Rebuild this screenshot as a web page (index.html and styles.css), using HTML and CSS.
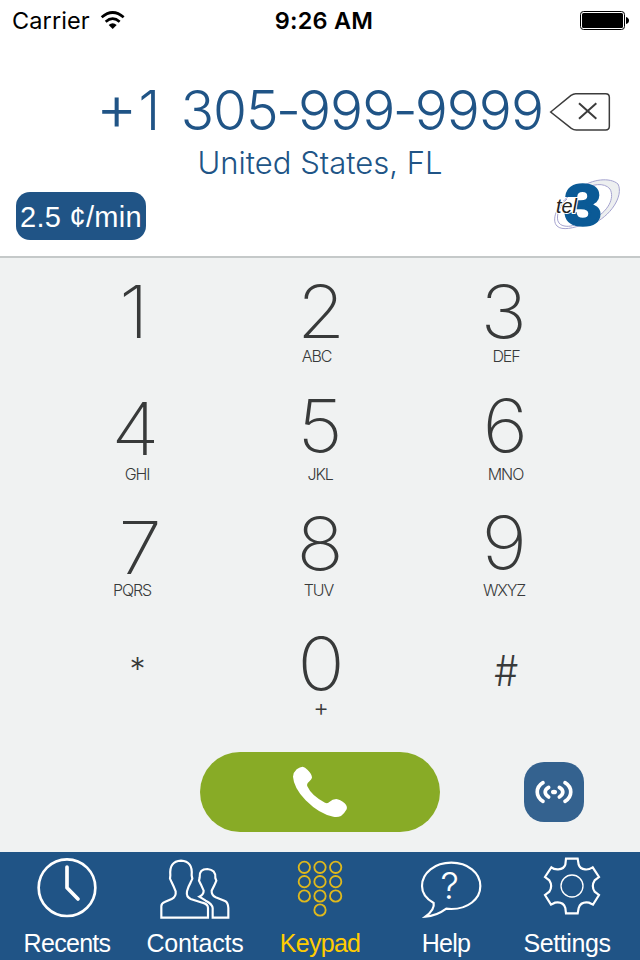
FILE: index.html
```html
<!DOCTYPE html>
<html lang="en">
<head>
  <meta charset="UTF-8" />
  <meta name="viewport" content="width=device-width, initial-scale=1.0" />
  <title>Keypad</title>
  <link rel="stylesheet" href="styles.css">
</head>
<body>
  <div class="phone">
    <div class="statusbar">
      <div class="carrier">
        <span>Carrier</span>
        <svg class="wifi" viewBox="300 30 78 60" width="26" height="20">
          <path d="M305 52 Q338 23 371 52" fill="none" stroke="#000" stroke-width="8"/>
          <path d="M317 65 Q338 47 359 65" fill="none" stroke="#000" stroke-width="8"/>
          <path d="M326 75 Q338 64 350 75 L338 87Z"/>
        </svg>
      </div>
      <div class="time">9:26 AM</div>
      <svg class="battery" viewBox="0 0 50 20" width="50" height="20">
        <rect x="0.5" y="1.5" width="44" height="18" rx="3" fill="none" stroke="#000"/>
        <rect x="2" y="3" width="41" height="15" rx="1.5"/>
        <path d="M46 7 Q49 8 49 10.500 Q49 13 46 14Z"/>
      </svg>
    </div>

    <div class="display">
      <div class="number-row">
        <div class="number"><span class="prefix">+</span>1 305<span class="dash">-</span>999<span class="dash">-</span>9999</div>
        <svg class="backspace" viewBox="687 273 186 120" width="62" height="40">
          <path d="M692 333 L753 283 Q760 278 767 278 H857 Q868 278 868 289 V376 Q868 387 857 387 H769 Q761 387 754 382Z"/>
          <path class="cross" d="M777 307 L829 353 M829 307 L777 353"/>
        </svg>
      </div>
      <div class="location">United States, FL</div>
      <div class="info-row">
        <div class="rate">2.5 ¢/min</div>
        <svg class="logo" viewBox="0 0 70 54" width="70" height="54">
          <path d="M28 10 C40 1 58 -1 66 6 C72 18 58 39 40 46 L41 41 C56 34 63 20 58 11 C52 4 40 6 31 12Z" fill="#edeff0" stroke="#a5a3cf"/>
          <path d="M17 18 C5 27 -1 42 5 48 C10 53 22 50 32 46 M15 21 C7 28 3 40 7 45 C10 49 18 49 22 47" fill="none" stroke="#a5a3cf"/>
          <text class="logo-three" x="12.500" y="47" textLength="37" lengthAdjust="spacingAndGlyphs">3</text>
          <text class="logo-tel" x="4" y="35" textLength="21" lengthAdjust="spacingAndGlyphs">tel</text>
        </svg>
      </div>
    </div>

    <div class="keypad">
      <div class="key key-1"><span class="digit">1</span></div>
      <div class="key key-2"><span class="digit">2</span><span class="letters">ABC</span></div>
      <div class="key key-3"><span class="digit">3</span><span class="letters">DEF</span></div>
      <div class="key key-4"><span class="digit">4</span><span class="letters">GHI</span></div>
      <div class="key key-5"><span class="digit">5</span><span class="letters">JKL</span></div>
      <div class="key key-6"><span class="digit">6</span><span class="letters">MNO</span></div>
      <div class="key key-7"><span class="digit">7</span><span class="letters">PQRS</span></div>
      <div class="key key-8"><span class="digit">8</span><span class="letters">TUV</span></div>
      <div class="key key-9"><span class="digit">9</span><span class="letters">WXYZ</span></div>
      <div class="key"><span class="symbol star">*</span></div>
      <div class="key key-0"><span class="digit">0</span><span class="letters plus">+</span></div>
      <div class="key"><span class="symbol hash">#</span></div>
    </div>

    <div class="actions">
      <div class="call">
        <svg viewBox="300 72 180 168" width="60" height="56">
          <path fill="#fff" d="M338 80 Q345 81 353 90 Q366 103 366 113 Q365 118 357 125 Q349 131 352 139 Q365 168 405 188 Q413 192 419 185 Q427 177 439 177 Q450 178 464 190 Q473 199 470 208 Q465 218 453 228 Q443 232 430 230 Q390 224 347 181 Q311 143 309 110 Q310 97 320 88 Q330 80 338 80Z"/>
        </svg>
      </div>
      <div class="signal">
        <svg viewBox="1002 66 180 180" width="60" height="60">
          <path d="M1059 128 C1036 142 1036 170 1059 184 M1076 142 C1062 150 1062 162 1076 171 M1125 128 C1148 142 1148 170 1125 184 M1108 142 C1122 150 1122 162 1108 171"/>
          <ellipse cx="1092" cy="156" rx="9" ry="7"/>
        </svg>
      </div>
    </div>

    <div class="tabs">
      <div class="tab recents">
        <svg viewBox="104 24 198 192" width="66" height="64">
          <circle cx="203" cy="119" r="85" stroke-width="8"/>
          <path d="M203 57 V119 L236 153" stroke-width="11" stroke-linecap="round" stroke-linejoin="round"/>
        </svg>
        <span>Recents</span>
      </div>
      <div class="tab contacts">
        <svg viewBox="477 24 222 192" width="74" height="64">
          <path d="M487 209 V175 Q487 166 497 162 L518 153 Q532 146 530 130 Q524 115 518 103 L513 92 L514 82 Q510 40 546 38 Q582 40 578 82 L580 92 L575 103 Q568 115 564 130 Q561 146 575 153 L610 164 Q627 168 627 180 V209Z"/>
          <path d="M641 209 V180 Q640 168 620 158 L601 146 Q614 140 614 128 L606 110 L600 98 L602 88 Q600 63 625 63 Q651 65 649 90 L652 98 L646 112 L638 128 Q637 142 650 148 L678 159 Q687 163 688 180 V209Z"/>
        </svg>
        <span>Contacts</span>
      </div>
      <div class="tab keys active">
        <svg viewBox="112 24 192 192" width="64" height="64">
          <circle cx="161" cy="58" r="17"/><circle cx="208" cy="58" r="17"/><circle cx="255" cy="58" r="17"/>
          <circle cx="161" cy="101" r="17"/><circle cx="208" cy="101" r="17"/><circle cx="255" cy="101" r="17"/>
          <circle cx="161" cy="144" r="17"/><circle cx="208" cy="144" r="17"/><circle cx="255" cy="144" r="17"/>
          <circle cx="208" cy="186" r="17"/>
        </svg>
        <span>Keypad</span>
      </div>
      <div class="tab help">
        <svg viewBox="84 24 198 192" width="66" height="64">
          <path d="M131 165 C108 152 96 135 96 114 C96 74 135 44 184 44 C233 44 271 74 271 114 C271 154 233 183 184 183 L169 182 C150 196 128 205 106 206 C124 193 134 180 131 165Z"/>
          <text class="question" x="179" y="153" text-anchor="middle">?</text>
        </svg>
        <span>Help</span>
      </div>
      <div class="tab settings">
        <svg viewBox="450 24 192 192" width="64" height="64">
          <path d="M528 32 H563 L566 50 Q570 63 585 64 Q595 66 608 58 L627 87 L614 97 Q603 114 614 131 L627 141 L609 170 L597 164 Q572 160 566 180 L563 196 H528 L526 180 Q520 160 495 164 L483 170 L465 141 L478 131 Q489 114 478 97 L465 87 L484 58 Q492 65 505 64 Q522 63 526 50Z"/>
          <circle cx="546" cy="114" r="33" stroke-width="4"/>
        </svg>
        <span>Settings</span>
      </div>
    </div>
  </div>
</body>
</html>
```
FILE: styles.css
```css
body {
  margin: 0;
  font-family: Inter, "Liberation Sans", sans-serif;
  background: #fff;
}
.phone {
  display: flex;
  flex-direction: column;
  width: 640px;
  height: 960px;
  overflow: hidden;
  background: #f0f2f2;
}
svg {
  display: block;
  flex: none;
  overflow: visible;
}

/* status bar */
.statusbar {
  display: grid;
  grid-template-columns: 1fr auto 1fr;
  align-items: center;
  height: 40px;
  padding: 0 10px 0 12px;
  font-size: 23.5px;
  color: #000;
  background: #fff;
}
.carrier {
  display: flex;
  align-items: center;
  gap: 10px;
  letter-spacing: 0.1px;
}
.time {
  padding-left: 6px;
  font-weight: 600;
  letter-spacing: 0.2px;
}
.battery {
  justify-self: end;
}

/* number display */
.display {
  box-sizing: border-box;
  height: 218px;
  padding-top: 39px;
  background: #fff;
  border-bottom: 2px solid #c5c9c9;
  color: #205486;
}
.number-row {
  display: flex;
  align-items: center;
  justify-content: flex-end;
  height: 62px;
  padding-right: 29px;
  gap: 6px;
}
.number {
  margin-top: -3px;
  font-size: 55px;
  font-weight: 300;
  line-height: 60px;
  letter-spacing: -1px;
  word-spacing: 7px;
  white-space: nowrap;
}
.prefix {
  font-size: 64px;
  letter-spacing: 1px;
}
.dash {
  margin: 0 -2px 0 -1.5px;
}
.backspace {
  margin-top: 3px;
}
.backspace path {
  fill: none;
  stroke: #3c3c3c;
  stroke-width: 4.5;
}
.backspace .cross {
  stroke-width: 6;
}
.location {
  height: 40px;
  line-height: 44px;
  font-size: 31px;
  font-weight: 300;
  text-align: center;
}
.info-row {
  display: flex;
  justify-content: space-between;
  align-items: flex-start;
  padding: 0 18px 0 16px;
}
.rate {
  width: 130px;
  height: 48px;
  margin-top: 11px;
  border-radius: 14px;
  background: #205486;
  color: #fff;
  font-family: "Liberation Sans", sans-serif;
  font-size: 29px;
  line-height: 51px;
  letter-spacing: 0.3px;
  text-align: center;
  white-space: nowrap;
}
.logo {
  margin-top: -3px;
}
.logo-three {
  font: bold 58px "Liberation Sans", sans-serif;
  fill: #0b5a96;
  stroke: #0b5a96;
  stroke-width: 2.5px;
}
.logo-tel {
  font: italic 20px "Liberation Sans", sans-serif;
  fill: #222;
  stroke: #fff;
  stroke-width: 2px;
  paint-order: stroke;
}

/* keypad */
.keypad {
  display: grid;
  grid-template-columns: repeat(3, 184px);
  grid-template-rows: 118px 116px 120px 118px;
  height: 472px;
  padding: 0 44px;
  color: #383a3a;
}
.key {
  display: flex;
  flex-direction: column;
  align-items: center;
  padding-top: 27px;
}
.digit {
  height: 54px;
  line-height: 54px;
  font-size: 73px;
  font-weight: 200;
  transform: scaleX(1.07);
}
.letters {
  height: 20px;
  margin-top: 7px;
  line-height: 20px;
  font-size: 16px;
  font-weight: 300;
  letter-spacing: -1.1px;
}
.plus {
  margin-top: 5px;
  font-size: 24px;
  letter-spacing: 0;
}
.symbol {
  font-weight: 300;
  line-height: 54px;
}
.star {
  margin: 4px 0 0 3px;
  font-size: 32px;
}
.hash {
  margin: 5px 0 0 4px;
  font-size: 42px;
  transform: scaleX(0.9);
}

.key-1 .digit { translate: -2px 0; }
.key-2 .digit { translate: 1.5px 0; }
.key-4 .digit { translate: -1px -1px; }
.key-5 .digit { translate: 0 -4px; }
.key-6 .digit { translate: 1px -4px; }
.key-7 .digit { translate: 4px 2px; }
.key-8 .digit { translate: 0 -2px; }
.key-9 .digit { translate: 0 -3px; }
.key-0 .digit { translate: 1px -2px; }
.key-2 .letters { translate: -3.5px 0; }
.key-3 .letters { translate: 2px 0; }
.key-4 .letters { translate: 1px 0; }
.key-6 .letters { translate: 1.5px 0; }
.key-7 .letters { translate: -4px 0; }
.key-8 .letters { translate: -1.5px 0; }
.key-0 .letters { translate: 1px 0; }

/* call row */
.actions {
  display: grid;
  grid-template-columns: 200px 240px 84px 60px;
  align-items: center;
  height: 120px;
  padding-top: 2px;
}
.call {
  grid-column: 2;
  display: flex;
  justify-content: center;
  align-items: center;
  height: 80px;
  border-radius: 40px;
  background: #88ab26;
}
.signal {
  grid-column: 4;
  width: 60px;
  height: 60px;
  border-radius: 20px;
  background: #34628f;
}
.signal path {
  fill: none;
  stroke: #fff;
  stroke-width: 11;
  stroke-linecap: round;
}
.signal ellipse {
  fill: #fff;
}

/* tab bar */
.tabs {
  display: grid;
  grid-template-columns: repeat(5, 126px);
  height: 108px;
  padding: 0 5px;
  background: #205486;
}
.tab {
  display: flex;
  flex-direction: column;
  align-items: center;
  padding-top: 4px;
  color: #fff;
  font-family: "Liberation Sans", sans-serif;
  font-size: 25px;
  letter-spacing: -0.7px;
}
.tab svg {
  fill: none;
  stroke: currentColor;
  stroke-width: 6.5;
}
.tab span {
  line-height: 46px;
}
.recents {
  padding-right: 2px;
}
.contacts {
  padding-left: 2px;
  letter-spacing: -0.2px;
}
.help svg {
  margin-left: 10px;
}
.settings span {
  margin-right: 10px;
  letter-spacing: -0.4px;
}
.active {
  color: #fc0;
}
.active svg {
  stroke: #dfb91c;
  stroke-width: 5.5;
}
.question {
  font: 300 110px Inter, sans-serif;
  fill: #fff;
  stroke: none;
}
```
